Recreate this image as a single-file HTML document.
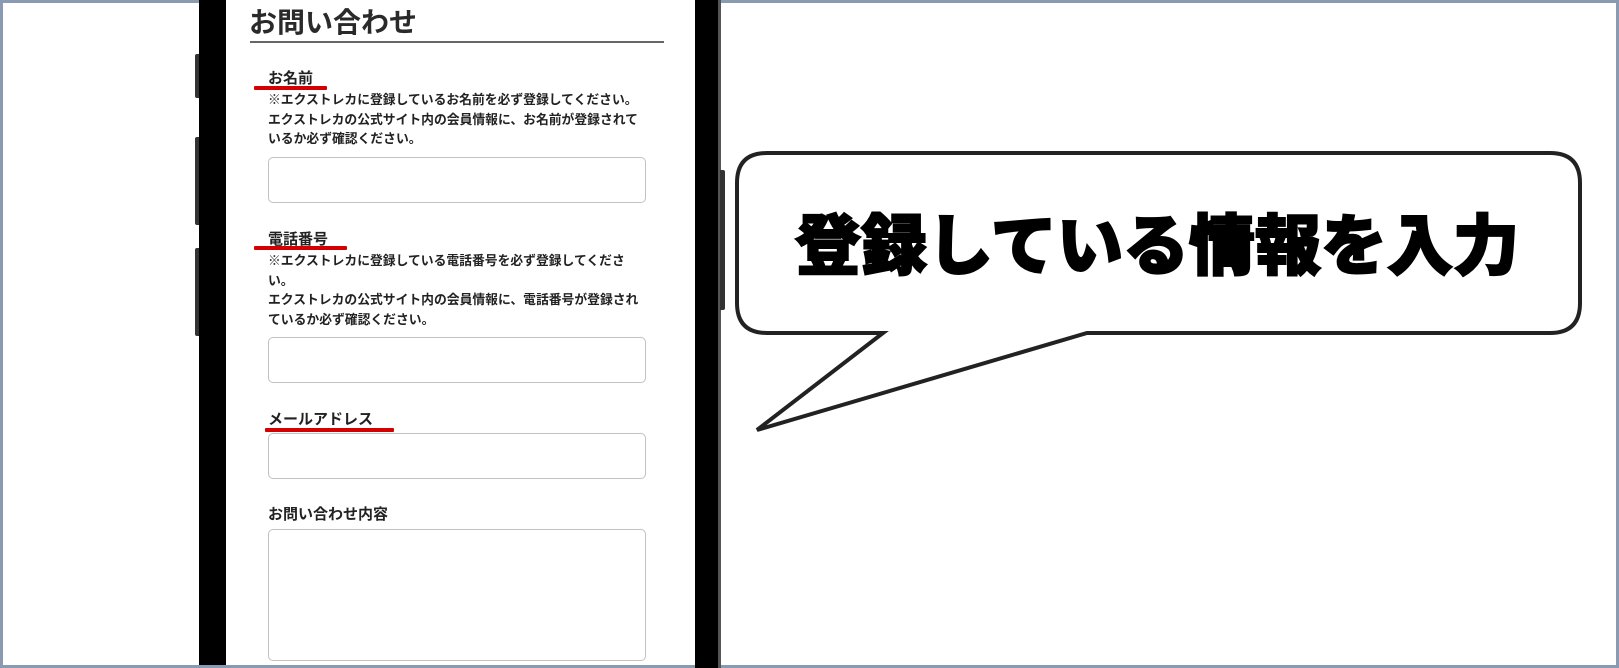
<!DOCTYPE html>
<html><head><meta charset="utf-8"><style>
*{margin:0;padding:0;box-sizing:border-box}
body{width:1619px;height:668px;position:relative;overflow:hidden;background:#fff;font-family:"Liberation Sans","Noto Sans CJK JP",sans-serif;color:#222}
.a{position:absolute}
.frame{left:0;top:0;width:1619px;height:668px;border:3px solid #8a9ab0}
.lbl{font-weight:bold;font-size:15px;line-height:16px;white-space:nowrap}
.note{font-weight:bold;font-size:12.8px;line-height:19.5px;white-space:nowrap;color:#222}
.red{background:#d40000;height:4px;border-radius:1px}
.inp{border:1.5px solid #c2c2c2;border-radius:5px;background:#fff}
</style></head><body>
<div class="a frame"></div>
<div class="a" style="left:199px;top:0;width:521px;height:668px;background:#000"></div>
<div class="a" style="left:718px;top:0;width:3px;height:668px;background:#555"></div>
<div class="a" style="left:226px;top:0;width:469px;height:665px;background:#fff"></div>
<div class="a" style="left:195px;top:54px;width:4px;height:44px;background:#333;border-radius:2px 0 0 2px"></div>
<div class="a" style="left:195px;top:137px;width:4px;height:88px;background:#333;border-radius:2px 0 0 2px"></div>
<div class="a" style="left:195px;top:248px;width:4px;height:88px;background:#333;border-radius:2px 0 0 2px"></div>
<div class="a" style="left:720px;top:170px;width:5px;height:140px;background:#333;border-radius:0 2px 2px 0"></div>
<div class="a" style="left:0;top:665px;width:695px;height:3px;background:#8a9ab0"></div>

<div class="a" style="left:249px;top:6px;font-size:28px;font-weight:bold;line-height:34px;white-space:nowrap;color:#2a2a2a">お問い合わせ</div>
<div class="a" style="left:250px;top:41px;width:414px;height:2px;background:#666"></div>

<div class="a lbl" style="left:268px;top:71px">お名前</div>
<div class="a red" style="left:254px;top:86px;width:73px"></div>
<div class="a note" style="left:268px;top:90px">※エクストレカに登録しているお名前を必ず登録してください。<br>エクストレカの公式サイト内の会員情報に、お名前が登録されて<br>いるか必ず確認ください。</div>
<div class="a inp" style="left:268px;top:157px;width:378px;height:46px"></div>

<div class="a lbl" style="left:268px;top:232px">電話番号</div>
<div class="a red" style="left:254px;top:246px;width:93px"></div>
<div class="a note" style="left:268px;top:251px">※エクストレカに登録している電話番号を必ず登録してくださ<br>い。<br>エクストレカの公式サイト内の会員情報に、電話番号が登録され<br>ているか必ず確認ください。</div>
<div class="a inp" style="left:268px;top:337px;width:378px;height:46px"></div>

<div class="a lbl" style="left:268px;top:412px">メールアドレス</div>
<div class="a red" style="left:265px;top:428px;width:129px"></div>
<div class="a inp" style="left:268px;top:433px;width:378px;height:46px"></div>

<div class="a lbl" style="left:268px;top:507px">お問い合わせ内容</div>
<div class="a inp" style="left:268px;top:529px;width:378px;height:132px"></div>

<svg class="a" style="left:0;top:0" width="1619" height="668">
<path d="M767,153 H1550 Q1580,153 1580,183 V303 Q1580,333 1550,333 H1087 L757,430 L883,333 H767 Q737,333 737,303 V183 Q737,153 767,153 Z" fill="#fff" stroke="#222" stroke-width="4" stroke-linejoin="miter"/>
</svg>
<div class="a" style="left:795px;top:201px;font-size:66px;line-height:80px;font-weight:900;white-space:nowrap;color:#000;font-family:'Noto Sans CJK JP',sans-serif;-webkit-text-stroke:2px #000">登録している情報を入力</div>
</body></html>
